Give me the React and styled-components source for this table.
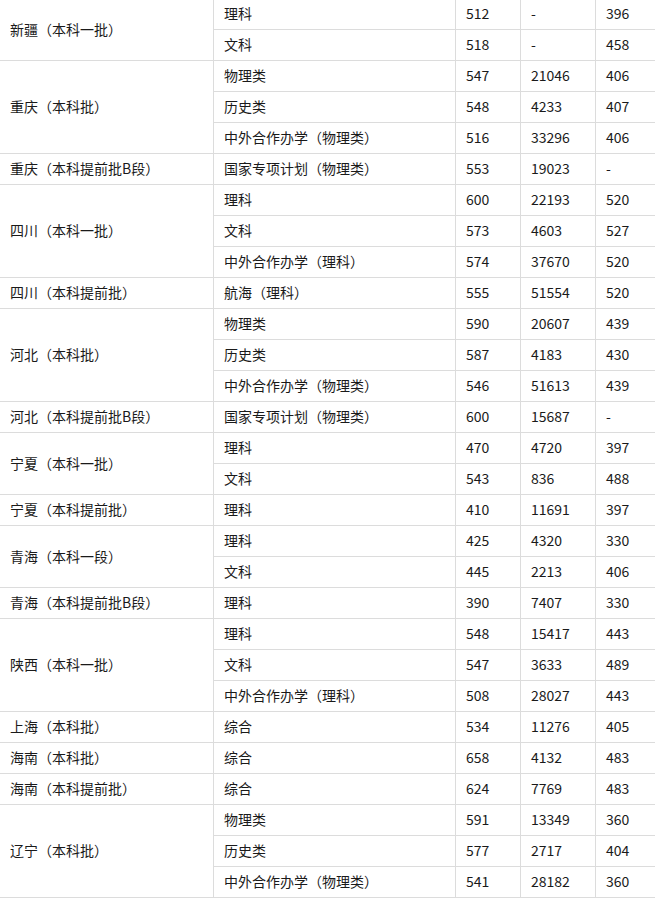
import React from 'react';
import styled, { createGlobalStyle } from 'styled-components';

const GlobalStyle = createGlobalStyle`
  html, body {
    margin: 0;
    padding: 0;
    background: #fff;
    overflow: hidden;
  }
`;

const Wrap = styled.div`
  margin-top: -2px;
  margin-left: -1px;
  width: 656px;
  overflow: hidden;
`;

const Table = styled.table`
  border-collapse: collapse;
  table-layout: fixed;
  width: 656px;
  font-family: 'Noto Sans CJK SC', 'Noto Sans', sans-serif;
  font-size: 14px;
  color: #1a1a1a;
`;

const Col = styled.col`
  width: ${(p) => p.$w}px;
`;

const Cell = styled.td`
  border: 1px solid #dcdcdc;
  height: 31px;
  padding: 0 10px 2px;
  box-sizing: border-box;
  vertical-align: middle;
  white-space: nowrap;
  line-height: 20px;
`;

const widths = [214, 242, 65, 75, 60];

const data = [
  ['新疆（本科一批）', [['理科', '512', '-', '396'], ['文科', '518', '-', '458']]],
  ['重庆（本科批）', [['物理类', '547', '21046', '406'], ['历史类', '548', '4233', '407'], ['中外合作办学（物理类）', '516', '33296', '406']]],
  ['重庆（本科提前批B段）', [['国家专项计划（物理类）', '553', '19023', '-']]],
  ['四川（本科一批）', [['理科', '600', '22193', '520'], ['文科', '573', '4603', '527'], ['中外合作办学（理科）', '574', '37670', '520']]],
  ['四川（本科提前批）', [['航海（理科）', '555', '51554', '520']]],
  ['河北（本科批）', [['物理类', '590', '20607', '439'], ['历史类', '587', '4183', '430'], ['中外合作办学（物理类）', '546', '51613', '439']]],
  ['河北（本科提前批B段）', [['国家专项计划（物理类）', '600', '15687', '-']]],
  ['宁夏（本科一批）', [['理科', '470', '4720', '397'], ['文科', '543', '836', '488']]],
  ['宁夏（本科提前批）', [['理科', '410', '11691', '397']]],
  ['青海（本科一段）', [['理科', '425', '4320', '330'], ['文科', '445', '2213', '406']]],
  ['青海（本科提前批B段）', [['理科', '390', '7407', '330']]],
  ['陕西（本科一批）', [['理科', '548', '15417', '443'], ['文科', '547', '3633', '489'], ['中外合作办学（理科）', '508', '28027', '443']]],
  ['上海（本科批）', [['综合', '534', '11276', '405']]],
  ['海南（本科批）', [['综合', '658', '4132', '483']]],
  ['海南（本科提前批）', [['综合', '624', '7769', '483']]],
  ['辽宁（本科批）', [['物理类', '591', '13349', '360'], ['历史类', '577', '2717', '404'], ['中外合作办学（物理类）', '541', '28182', '360']]],
];

export default function App() {
  return (
    <>
      <GlobalStyle />
      <Wrap>
        <Table>
          <colgroup>
            {widths.map((w, i) => (
              <Col key={i} $w={w} />
            ))}
          </colgroup>
          <tbody>
            {data.map(([province, rows]) =>
              rows.map((r, i) => (
                <tr key={province + i}>
                  {i === 0 && <Cell rowSpan={rows.length}>{province}</Cell>}
                  {r.map((v, j) => (
                    <Cell key={j}>{v}</Cell>
                  ))}
                </tr>
              ))
            )}
          </tbody>
        </Table>
      </Wrap>
    </>
  );
}
